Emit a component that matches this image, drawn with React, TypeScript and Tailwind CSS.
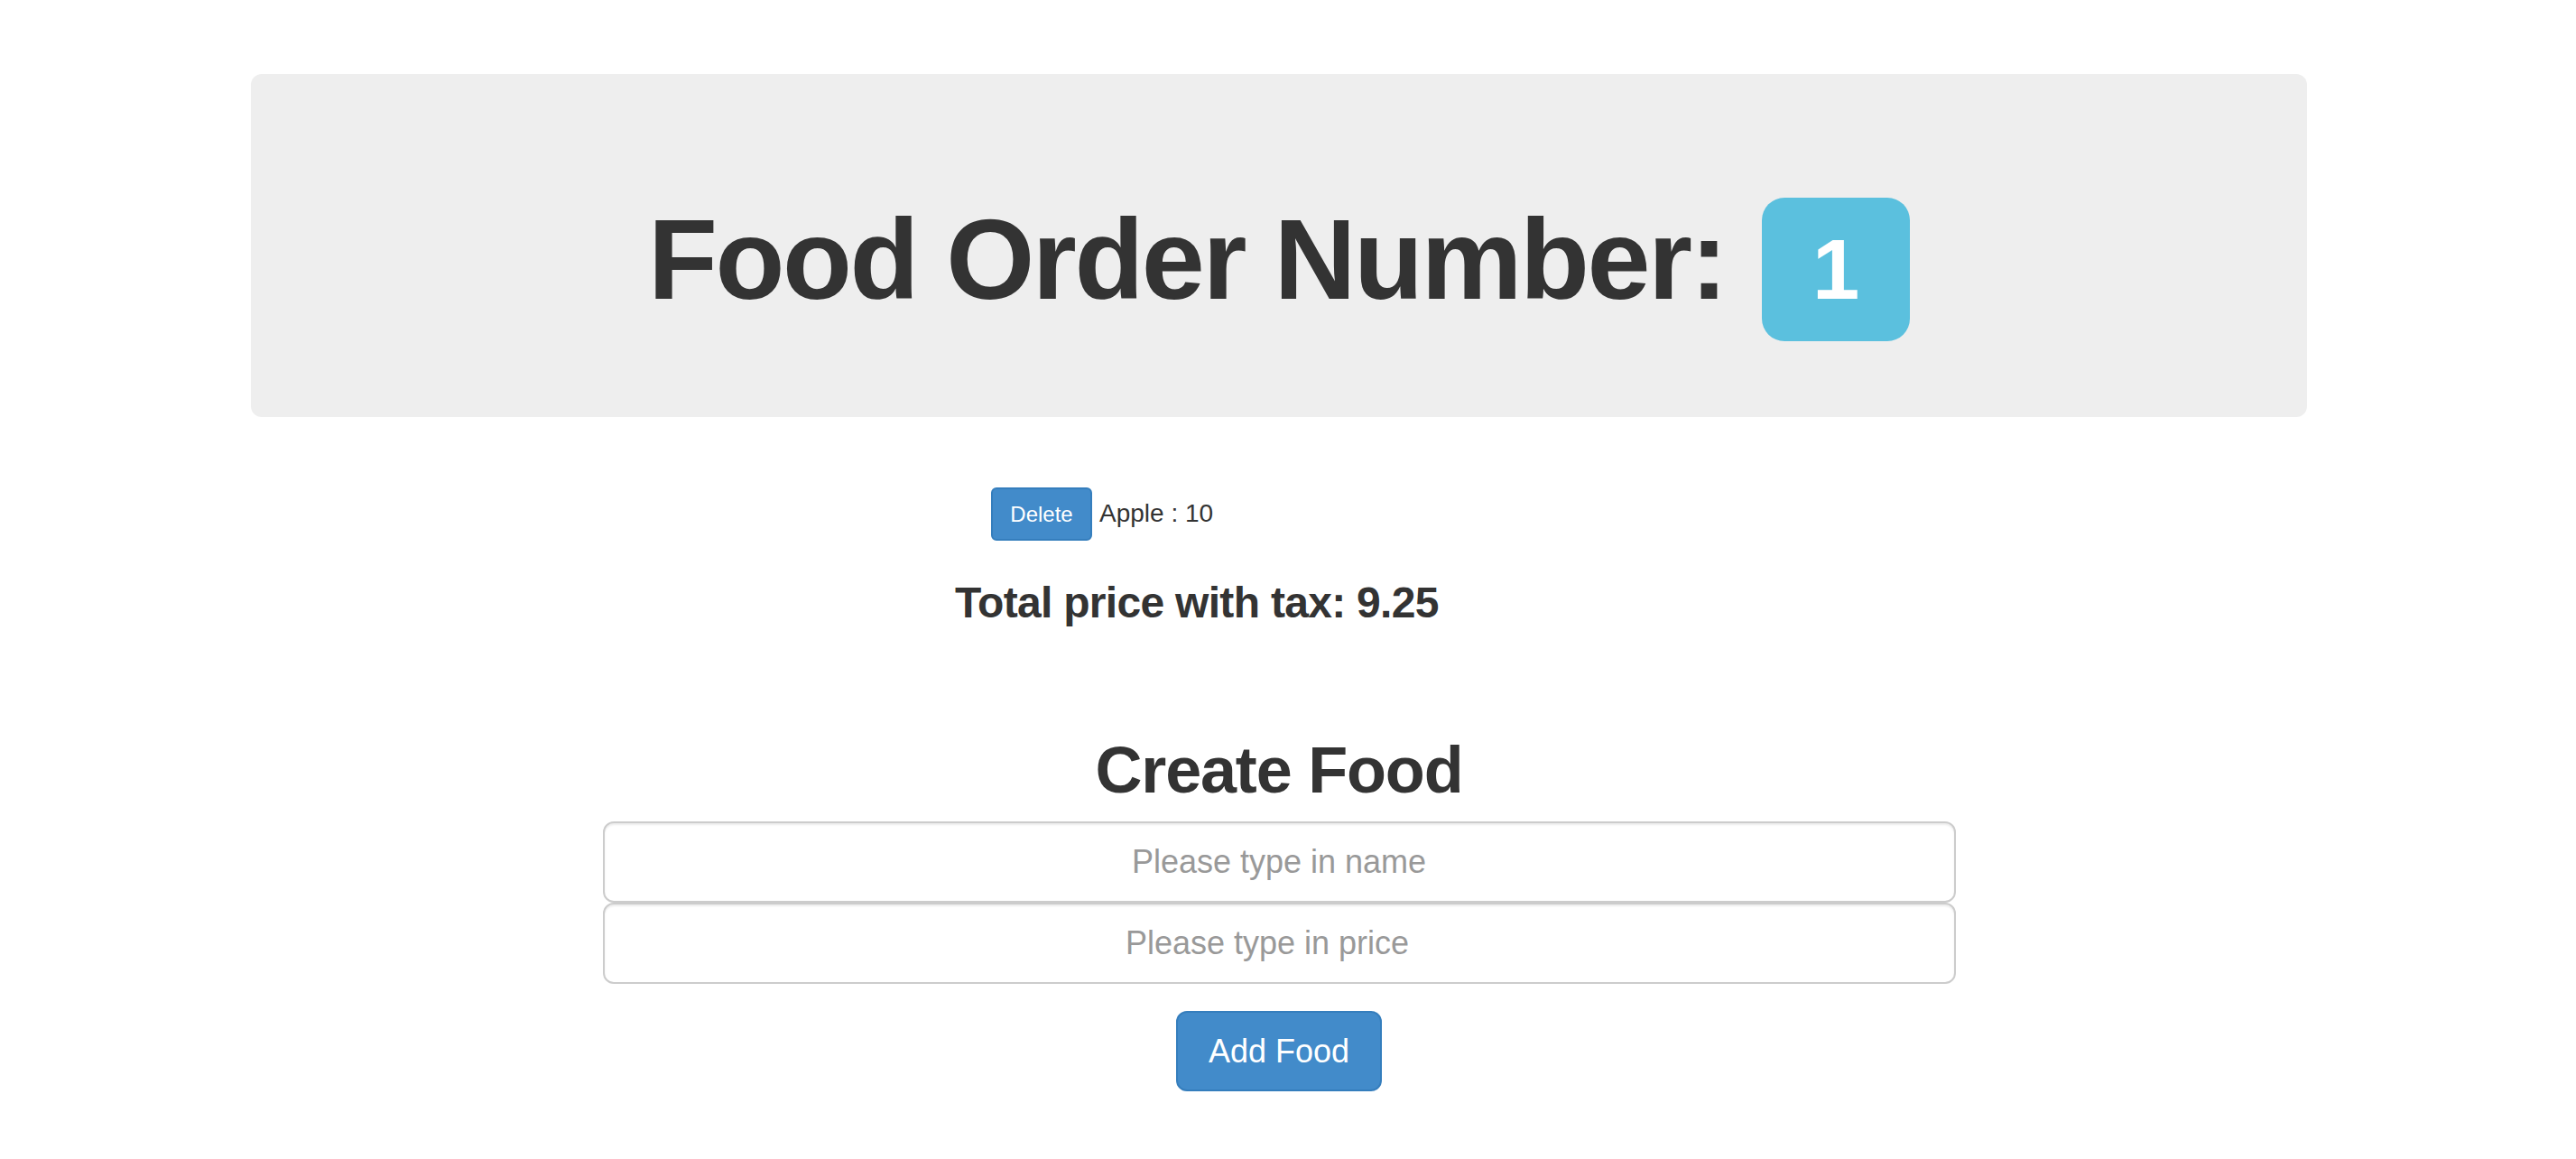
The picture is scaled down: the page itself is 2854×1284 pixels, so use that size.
export default function App() {
  return (
    <div className="min-h-screen w-[2834px] bg-white pt-[82px] font-['Liberation_Sans',Arial,Helvetica,sans-serif] text-[#333]">
      <div className="mx-auto h-[380px] w-[2278px] rounded-[12px] bg-[#eee] pt-[137px]">
        <h1 className="flex items-baseline justify-center gap-[40px] text-[126px] font-bold leading-none tracking-[-2.5px]">
          <span>Food Order Number:</span>
          <span className="inline-flex h-[159px] w-[164px] items-center justify-center rounded-[25px] bg-[#5bc0de] text-[94px] leading-none tracking-normal text-white">
            1
          </span>
        </h1>
      </div>

      <div className="mx-auto w-[2278px]">
        <div className="mt-[78px] flex items-baseline gap-[8px] pl-[820px]">
          <button className="inline-flex h-[59px] w-[112px] items-center justify-center rounded-[6px] border-2 border-[#357ebd] bg-[#428bca] text-[24px] leading-[36px] text-white">
            Delete
          </button>
          <span className="text-[28px]">Apple : 10</span>
        </div>
        <h3 className="mt-[42px] pl-[780px] text-[48px] font-bold leading-[53px] tracking-[-0.7px]">
          Total price with tax: 9.25
        </h3>
      </div>

      <div className="mt-[120px] flex flex-col items-center">
        <h2 className="text-[72px] font-bold leading-[79px] tracking-[-1.2px]">Create Food</h2>
        <div className="mt-[17px] flex w-[1499px] flex-col">
          <input
            className="h-[90px] w-full rounded-[12px] border-2 border-[#ccc] px-[32px] text-center text-[36px] shadow-[inset_0_2px_2px_rgba(0,0,0,0.075)] outline-none placeholder:text-[#999]"
            placeholder="Please type in name"
          />
          <input
            className="h-[90px] w-full rounded-[12px] border-2 border-[#ccc] pl-[32px] pr-[58px] text-center text-[36px] shadow-[inset_0_2px_2px_rgba(0,0,0,0.075)] outline-none placeholder:text-[#999]"
            placeholder="Please type in price"
          />
        </div>
        <button className="mt-[30px] h-[89px] w-[228px] rounded-[12px] border-2 border-[#357ebd] bg-[#428bca] text-[36px] text-white">
          Add Food
        </button>
      </div>
    </div>
  )
}
